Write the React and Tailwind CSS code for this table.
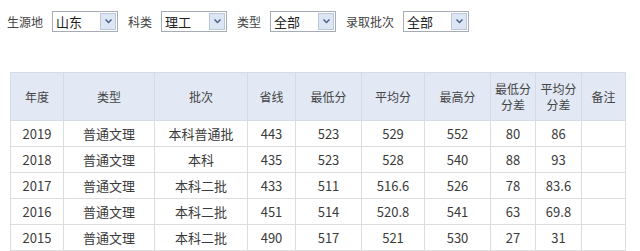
import React from 'react';

const filters = [
  { label: '生源地', value: '山东' },
  { label: '科类', value: '理工' },
  { label: '类型', value: '全部' },
  { label: '录取批次', value: '全部' },
];

const rows = [
  ['2019', '普通文理', '本科普通批', '443', '523', '529', '552', '80', '86', ''],
  ['2018', '普通文理', '本科', '435', '523', '528', '540', '88', '93', ''],
  ['2017', '普通文理', '本科二批', '433', '511', '516.6', '526', '78', '83.6', ''],
  ['2016', '普通文理', '本科二批', '451', '514', '520.8', '541', '63', '69.8', ''],
  ['2015', '普通文理', '本科二批', '490', '517', '521', '530', '27', '31', ''],
];

const widths = [53, 91, 93, 48, 66, 63, 66, 45, 46, 44];

const FakeSelect = ({ value }) => (
  <div className="flex h-[21px] w-[66px] items-center border border-[#a5acb5] bg-white">
    <span className="flex-1 pl-[3px] text-[13px] leading-none text-[#222]">{value}</span>
    <span className="m-px flex h-[17px] w-[16px] items-center justify-center border border-[#bcc8da] bg-[#dde6f4]">
      <svg width="7" height="5" viewBox="0 0 7 5">
        <path d="M0.5 0.5 L3.5 3.5 L6.5 0.5" fill="none" stroke="#4d6185" strokeWidth="1.5" />
      </svg>
    </span>
  </div>
);

export default function App() {
  return (
    <div className="h-[251px] w-[640px] overflow-hidden bg-white text-[#333]" style={{ fontFamily: '"Microsoft YaHei", "Noto Sans CJK SC", sans-serif' }}>
      <div className="flex items-center pl-[7px] pt-[11px]">
        {filters.map((f, i) => (
          <div key={f.label} className={`flex items-center ${i > 0 ? 'ml-[10px]' : ''}`}>
            <span className="mr-[9px] text-[12px] leading-none text-[#444]">{f.label}</span>
            <FakeSelect value={f.value} />
          </div>
        ))}
      </div>

      <table className="ml-[10px] mt-[40px] border-collapse text-[13px] text-[#3a3a3a]">
        <colgroup>
          {widths.map((w, i) => (
            <col key={i} style={{ width: w }} />
          ))}
        </colgroup>
        <thead>
          <tr className="h-[48px] bg-[#e2e9f4] text-[12px] text-[#444]">
            <th className="border border-[#d6dce6] font-normal">年度</th>
            <th className="border border-[#d6dce6] font-normal">类型</th>
            <th className="border border-[#d6dce6] font-normal">批次</th>
            <th className="border border-[#d6dce6] font-normal">省线</th>
            <th className="border border-[#d6dce6] font-normal">最低分</th>
            <th className="border border-[#d6dce6] font-normal">平均分</th>
            <th className="border border-[#d6dce6] font-normal">最高分</th>
            <th className="border border-[#d6dce6] font-normal leading-[16px]">最低分<br />分差</th>
            <th className="border border-[#d6dce6] font-normal leading-[16px]">平均分<br />分差</th>
            <th className="border border-[#d6dce6] font-normal">备注</th>
          </tr>
        </thead>
        <tbody>
          {rows.map((r) => (
            <tr key={r[0]} className="h-[26px]">
              {r.map((c, j) => (
                <td key={j} className="border border-[#dddddd] p-0 text-center">{c}</td>
              ))}
            </tr>
          ))}
        </tbody>
      </table>
    </div>
  );
}
